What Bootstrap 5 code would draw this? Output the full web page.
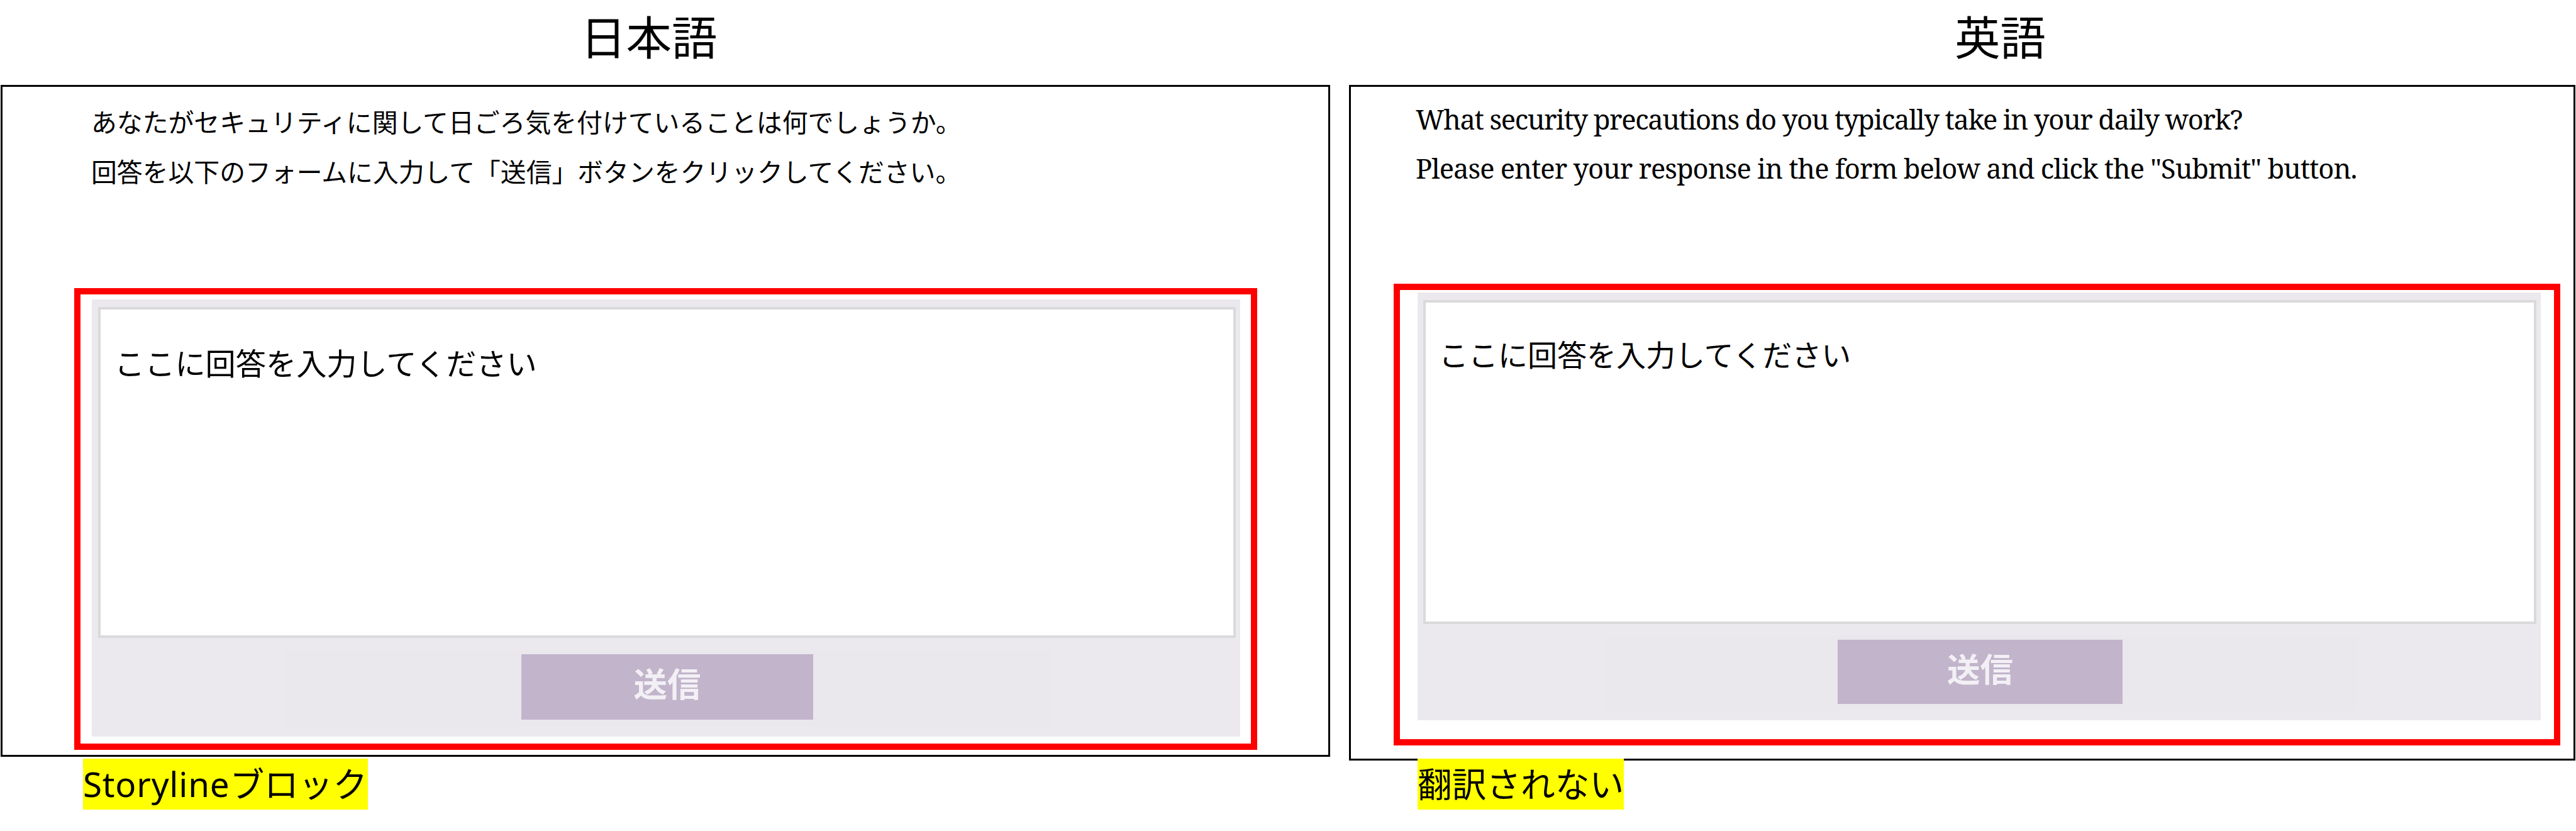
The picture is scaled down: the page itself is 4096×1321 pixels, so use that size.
<!DOCTYPE html>
<html lang="ja">
<head>
  <meta charset="UTF-8">
  <meta name="viewport" content="width=device-width, initial-scale=1.0">
  <title>日本語 / 英語</title>
  <link href="https://cdn.jsdelivr.net/npm/bootstrap@5.3.2/dist/css/bootstrap.min.css" rel="stylesheet">
  <style>
    body {
      font-family: "Noto Sans CJK JP", sans-serif;
      color: #000;
      background: #fff;
      overflow: hidden;
    }
    .compare { gap: 30px; padding-left: 1px; height: 1321px; }
    .side-ja { width: 2114px; }
    .side-en { width: 1950px; }

    .lang-title {
      height: 135px;
      margin: 0;
      font-size: 72.5px;
      font-weight: 400;
      line-height: 111px;
      color: #000;
    }
    .side-ja .lang-title { padding-left: 922px; }
    .side-en .lang-title { padding-left: 963px; }

    .panel { border: 3px solid #000; }
    .side-ja .panel { height: 1068px; padding-top: 15px; }
    .side-en .panel { height: 1074px; padding-top: 13px; }

    .question { white-space: nowrap; }
    .side-ja .question {
      height: 158px;
      margin-left: 141px;
      font-size: 40.85px;
      line-height: 79px;
    }
    .side-en .question {
      height: 155px;
      margin-left: 103px;
      font-family: "Noto Serif", "DejaVu Serif Condensed", "DejaVu Serif", serif;
      font-size: 43.5px;
      line-height: 77.5px;
      letter-spacing: -1px;
    }
    .side-en .question-first { letter-spacing: -1.36px; }

    .red-frame { border: 10px solid #f00; }
    .side-ja .red-frame { width: 1881px; height: 734px; margin: 147px 0 0 114px; padding: 8px 0 0 18px; }
    .side-en .red-frame { width: 1855px; height: 734px; margin: 145px 0 0 68px; padding: 4px 0 0 28px; }

    .story-block { background: #ebe9ee; }
    .side-ja .story-block { width: 1826px; height: 695px; padding: 12px 7px 0 10px; }
    .side-en .story-block { width: 1786px; height: 680px; padding: 12px 7px 0 9px; }

    .answer, .answer:focus {
      border: 4px solid #dadada;
      color: #000;
      line-height: 80px;
      resize: none;
      overflow: hidden;
    }
    .side-ja .answer { height: 526px; padding: 43px 22px 0; font-size: 48.2px; }
    .side-en .answer { height: 515px; padding: 41px 21px 0; font-size: 47px; }

    .submit-band { background: #eae7ed; }
    .side-ja .submit-band { width: 1223px; height: 121px; margin: 20px 0 0 296px; padding: 6px 0 0 377px; }
    .side-en .submit-band { width: 1199px; height: 120px; margin: 19px 0 0 288px; padding: 6px 0 0 371px; }

    .btn-send, .btn-send:hover {
      background: #c1b4cb;
      color: #f3f0f5;
      border: 0;
      padding: 0 0 14px;
      font-weight: 700;
      line-height: 1.5;
    }
    .side-ja .btn-send { width: 464px; height: 104px; font-size: 53.5px; }
    .side-en .btn-send { width: 453px; height: 102px; font-size: 52.5px; }

    .note {
      position: relative;
      height: 81px;
      background: #ff0;
      font-family: "Noto Sans", "Noto Sans CJK JP", sans-serif;
      font-size: 54.7px;
      line-height: 81px;
      white-space: nowrap;
    }
    .side-ja .note { width: 453px; margin: 3px 0 0 131px; }
    .side-en .note { width: 328px; margin: -3px 0 0 109px; }
    .note-latin { letter-spacing: .8px; }
  </style>
</head>
<body>
  <main class="compare d-flex align-items-start">
    <section class="side-ja d-flex flex-column align-items-start flex-shrink-0">
      <h1 class="lang-title">日本語</h1>
      <div class="panel w-100">
        <div class="question">
          <div>あなたがセキュリティに関して日ごろ気を付けていることは何でしょうか。</div>
          <div>回答を以下のフォームに入力して「送信」ボタンをクリックしてください。</div>
        </div>
        <div class="red-frame">
          <div class="story-block">
            <textarea class="answer form-control rounded-0 shadow-none">ここに回答を入力してください</textarea>
            <div class="submit-band">
              <button type="button" class="btn btn-send rounded-0 d-block">送信</button>
            </div>
          </div>
        </div>
      </div>
      <div class="note"><span class="note-latin">Storyline</span>ブロック</div>
    </section>

    <section class="side-en d-flex flex-column align-items-start flex-shrink-0">
      <h1 class="lang-title">英語</h1>
      <div class="panel w-100">
        <div class="question" lang="en">
          <div class="question-first">What security precautions do you typically take in your daily work?</div>
          <div>Please enter your response in the form below and click the "Submit" button.</div>
        </div>
        <div class="red-frame">
          <div class="story-block">
            <textarea class="answer form-control rounded-0 shadow-none">ここに回答を入力してください</textarea>
            <div class="submit-band">
              <button type="button" class="btn btn-send rounded-0 d-block">送信</button>
            </div>
          </div>
        </div>
      </div>
      <div class="note">翻訳されない</div>
    </section>
  </main>
  <script src="https://cdn.jsdelivr.net/npm/bootstrap@5.3.2/dist/js/bootstrap.bundle.min.js"></script>
</body>
</html>
